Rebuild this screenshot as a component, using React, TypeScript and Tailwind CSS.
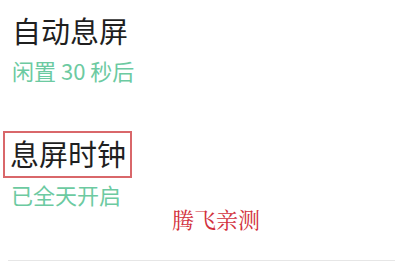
import React from 'react';

const cjk = { fontFamily: '"Noto Sans CJK SC", "Noto Sans", sans-serif' };
const serif = { fontFamily: '"Noto Serif CJK SC", "Liberation Serif", "Noto Sans CJK SC", serif' };

export default function App() {
  return (
    <div className="relative h-[264px] w-[395px] overflow-hidden bg-white" style={cjk}>
      <div className="pl-[12px] pt-[12px]">
        <p className="m-0 text-[29px] leading-[36px] text-[#1f1f1f]">自动息屏</p>
        <p className="m-0 mt-[8px] text-[22px] leading-[28px] text-[#6ccaa1]">闲置 30 秒后</p>
      </div>

      <div className="mt-[47px] pl-[3px]">
        <div className="inline-block border-2 border-[#d9676a] pl-[5px] pr-[4px] pt-[2px] pb-[4px]">
          <p className="m-0 text-[29px] leading-[37px] text-[#1f1f1f]">息屏时钟</p>
        </div>
        <p className="m-0 mt-[2px] pl-[8px] text-[22px] leading-[28px] text-[#6ccaa1]">已全天开启</p>
      </div>

      <p className="absolute left-[172px] top-[205px] m-0 text-[22px] leading-[28px] text-[#d2303c]" style={serif}>
        腾飞亲测
      </p>

      <div className="absolute bottom-[3px] left-[8px] right-0 h-[1px] bg-[#e6e6e6]" />
    </div>
  );
}
